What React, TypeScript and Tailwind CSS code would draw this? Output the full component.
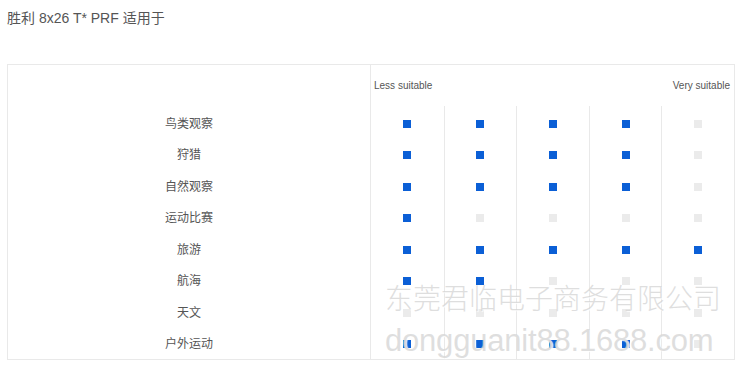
const rows: { label: string; marks: number[] }[] = [
  { label: "鸟类观察", marks: [1, 1, 1, 1, 0] },
  { label: "狩猎", marks: [1, 1, 1, 1, 0] },
  { label: "自然观察", marks: [1, 1, 1, 1, 0] },
  { label: "运动比赛", marks: [1, 0, 0, 0, 0] },
  { label: "旅游", marks: [1, 1, 1, 1, 1] },
  { label: "航海", marks: [1, 1, 0, 0, 0] },
  { label: "天文", marks: [0, 0, 0, 0, 0] },
  { label: "户外运动", marks: [1, 1, 1, 1, 0] },
];

const cols = [0, 1, 2, 3, 4];

export default function App() {
  return (
    <div className="relative w-[746px] h-[377px] bg-white font-['Liberation_Sans','Noto_Sans_CJK_SC',sans-serif] text-[#555]">
      {/* TITLE */}
      <div className="h-[64px] pl-[7px] pt-[9px] text-[14px] leading-[18px]">
        胜利 8x26 T* PRF 适用于
      </div>

      {/* TABLE */}
      <div className="ml-[7px] w-[728px] h-[296px] border border-[#e9e9e9] flex">
        <div className="w-[363px] border-r border-[#e9e9e9] pt-[43px]">
          {rows.map((r) => (
            <div
              key={r.label}
              className="h-[31.5px] flex items-center justify-center text-[12px]"
            >
              {r.label}
            </div>
          ))}
        </div>

        <div className="flex-1 flex flex-col">
          <div className="h-[41px] flex justify-between pl-[3px] pr-[4px] pt-[15px] text-[10px] leading-[12px]">
            <span>Less suitable</span>
            <span>Very suitable</span>
          </div>
          <div className="flex-1 grid grid-cols-5 overflow-hidden">
            {cols.map((c) => (
              <div
                key={c}
                className={`pt-[2px] ${c > 0 ? "border-l border-[#e9e9e9]" : ""}`}
              >
                {rows.map((r) => (
                  <div key={r.label} className="h-[31.5px] flex items-center justify-center">
                    <div
                      className={`w-[8px] h-[8px] ${
                        r.marks[c] ? "bg-[#0b5fd6]" : "bg-[#ebebeb]"
                      }`}
                    />
                  </div>
                ))}
              </div>
            ))}
          </div>
        </div>
      </div>

      {/* WATERMARK */}
      <div className="absolute left-[385px] top-[283px] pointer-events-none text-[rgba(212,212,212,0.75)] [text-shadow:1px_1px_1px_rgba(255,255,255,0.9)]">
        <div className="text-[28px] leading-[28px] font-['Noto_Sans_CJK_SC',sans-serif] font-light">
          东莞君临电子商务有限公司
        </div>
        <div className="mt-[14px] text-[31px] leading-[32px] tracking-[-0.2px]">
          dongguanit88.1688.com
        </div>
      </div>
    </div>
  );
}
